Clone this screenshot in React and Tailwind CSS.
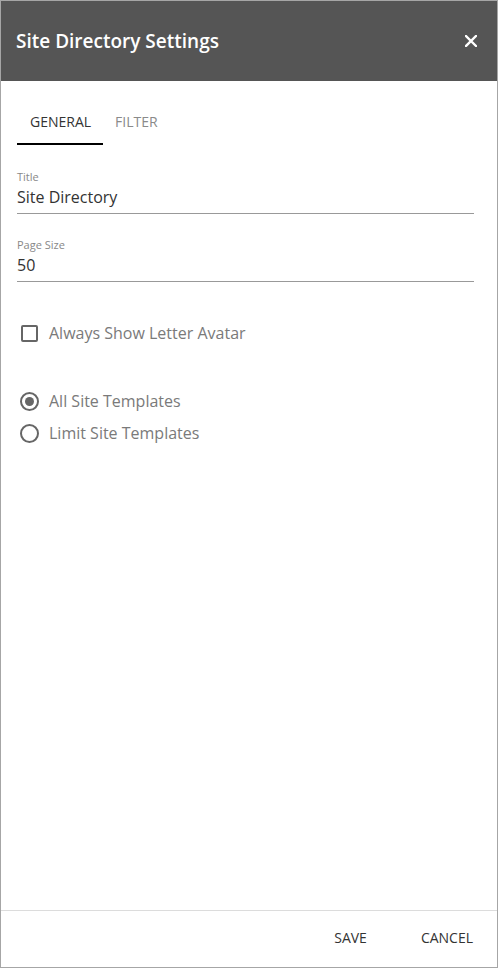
import React from "react";

export default function App() {
  return (
    <div
      className="w-[498px] h-[968px] border border-[#a6a6a6] bg-white flex flex-col"
      style={{ fontFamily: '"Open Sans", "Noto Sans", sans-serif' }}
    >
      <div className="h-[80px] bg-[#555555] flex items-center justify-between pl-[15px] pr-[20px] shrink-0">
        <div className="text-white text-[19px] font-semibold leading-none">Site Directory Settings</div>
        <svg width="12" height="12" viewBox="0 0 12 12">
          <path d="M1 1 L11 11 M11 1 L1 11" stroke="white" strokeWidth="2.4" strokeLinecap="square" />
        </svg>
      </div>

      <div className="flex-1 flex flex-col px-4">
        <div className="mt-4 flex">
          <div className="h-[48px] pl-[13px] pr-[12px] flex items-center text-[14px] text-[#333] border-b-2 border-black pt-[3px]">
            GENERAL
          </div>
          <div className="h-[48px] pl-[12px] pr-[13px] flex items-center text-[14px] text-[#8a8a8a] pt-[1px]">
            FILTER
          </div>
        </div>

        <div className="mt-[24px] mr-[7px] border-b border-[#999]">
          <div className="text-[11px] leading-[15px] text-[#888]">Title</div>
          <div className="text-[16px] leading-[26px] text-[#333] pb-[3px]">Site Directory</div>
        </div>

        <div className="mt-[23px] mr-[7px] border-b border-[#999]">
          <div className="text-[11px] leading-[15px] text-[#888]">Page Size</div>
          <div className="text-[16px] leading-[26px] text-[#333] pb-[3px]">50</div>
        </div>

        <div className="mt-[39px] flex items-center h-[24px] pl-[4px]">
          <div className="w-[17px] h-[17px] border-2 border-[#666] rounded-[2px]" />
          <div className="ml-[11px] text-[16px] text-[#7a7a7a]">Always Show Letter Avatar</div>
        </div>

        <div className="mt-[44px] flex items-center h-[24px] pl-[3px]">
          <div className="w-[19px] h-[19px] rounded-full border-2 border-[#666] flex items-center justify-center">
            <div className="w-[9px] h-[9px] rounded-full bg-[#666]" />
          </div>
          <div className="ml-[10px] text-[16px] text-[#7a7a7a]">All Site Templates</div>
        </div>

        <div className="mt-[8px] flex items-center h-[24px] pl-[3px]">
          <div className="w-[19px] h-[19px] rounded-full border-2 border-[#666]" />
          <div className="ml-[10px] text-[16px] text-[#7a7a7a]">Limit Site Templates</div>
        </div>
      </div>

      <div className="h-[57px] border-t border-[#dcdcdc] flex items-center justify-end gap-[54px] pr-[24px] shrink-0">
        <div className="text-[14px] text-[#333] pb-[3px]">SAVE</div>
        <div className="text-[14px] text-[#333] pb-[3px]">CANCEL</div>
      </div>
    </div>
  );
}
